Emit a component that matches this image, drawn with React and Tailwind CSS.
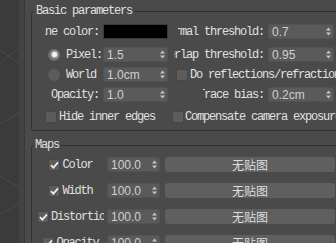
import React from "react";

const mono = "font-['Liberation_Mono',monospace] text-[12px] tracking-[-1.2px] text-[#e0e0e0] whitespace-nowrap";

function Arrows() {
  return (
    <svg width="5" height="9" viewBox="0 0 5 9" className="shrink-0">
      <path d="M0 3.5L2.5 0.5L5 3.5Z M0 5.5L5 5.5L2.5 8.5Z" fill="#c4c4c4" />
    </svg>
  );
}

function Spinner({ value, w }) {
  return (
    <div className={`flex items-center h-[15px] shrink-0 ${w} bg-[#5a5a5a] border border-[#525252] rounded-[2px] pl-[3px] pr-[2px]`}>
      <span className="flex-1 font-['Liberation_Sans',sans-serif] text-[12px] leading-none text-[#d0d0d0] whitespace-nowrap">{value}</span>
      <Arrows />
    </div>
  );
}

function Check({ checked }) {
  return (
    <div className="w-[12px] h-[12px] shrink-0 bg-[#5c5c5c] border border-[#464646] flex items-center justify-center">
      {checked && (
        <svg width="9" height="8" viewBox="0 0 9 8">
          <path d="M1 4.2L3.4 6.6L8 1.4" fill="none" stroke="#ececec" strokeWidth="1.8" />
        </svg>
      )}
    </div>
  );
}

function Radio({ on }) {
  return (
    <div className={`ml-[3px] w-[12px] h-[12px] shrink-0 rounded-full flex items-center justify-center ${on ? "bg-[#6c6c6c]" : "bg-[#5c5c5c]"}`}>
      {on && <div className="w-[5px] h-[5px] rounded-full bg-[#f4f4f4] shadow-[0_0_2px_1px_#c8c8c8]" />}
    </div>
  );
}

function RightLabel({ text, cls }) {
  return (
    <div className={`flex justify-end overflow-hidden shrink-0 ${cls}`}>
      <span className={`${mono} shrink-0`}>{text}</span>
    </div>
  );
}

function MapRow({ label, top, start }) {
  return (
    <div className={`flex items-center h-[15px] pl-[5px] ${top}`}>
      <div className={`w-[67px] flex items-center overflow-hidden shrink-0 ${start ? "justify-start" : "justify-center"}`}>
        <Check checked />
        <span className={`${mono} ml-[2px] shrink-0`}>{label}</span>
      </div>
      <div className="ml-[3px]">
        <Spinner value="100.0" w="w-[53px]" />
      </div>
      <div className="ml-[5px] w-[170px] h-[15px] shrink-0 bg-[#5f5f5f] rounded-[3px] flex items-center justify-center font-['Noto_Sans_CJK_SC',sans-serif] text-[12px] leading-none text-[#dedede]">
        无贴图
      </div>
    </div>
  );
}

export default function App() {
  return (
    <div className="w-[336px] h-[243px] overflow-hidden flex bg-[#4a4a4a]">
      <div className="w-[19px] h-full shrink-0 bg-[#3b3b3b]">
        <svg width="19" height="243" viewBox="0 0 19 243">
          <g stroke="#4a4a4a" strokeWidth="1" fill="none">
            <path d="M0 50L19 63" />
            <path d="M0 64L19 47" />
            <path d="M0 124L19 113" />
            <path d="M0 176L19 187" />
            <path d="M0 214L19 204" />
          </g>
        </svg>
      </div>
      <div className="w-[5px] h-full shrink-0 bg-[#434343]" />
      <div className="w-px h-full shrink-0 bg-[#383838]" />
      <div className="flex-1 overflow-hidden">
        <div className="w-[330px] pl-[6px] pt-[4px]">
          <fieldset className="border border-[#323232] rounded-[3px] pb-[6px]">
            <legend className={`${mono} ml-[2px] px-[2px] leading-[14px]`}>Basic parameters</legend>

            <div className="flex items-center h-[15px] mt-[6px] pl-[13px]">
              <div className="w-[54px] flex justify-end overflow-hidden shrink-0">
                <span className={`${mono} shrink-0`}>Line color:</span>
              </div>
              <div className="ml-[4px] w-[65px] h-[15px] shrink-0 bg-black border border-[#3a3a3a]" />
              <RightLabel text="Normal threshold:" cls="ml-[10px] w-[86px]" />
              <div className="ml-[4px]"><Spinner value="0.7" w="w-[66px]" /></div>
            </div>

            <div className="flex items-center h-[15px] mt-[8px] pl-[13px]">
              <div className="w-[54px] flex items-center shrink-0">
                <Radio on />
                <span className={`${mono} ml-[6px]`}>Pixel:</span>
              </div>
              <div className="ml-[4px]"><Spinner value="1.5" w="w-[65px]" /></div>
              <RightLabel text="Overlap threshold:" cls="ml-[6px] w-[90px]" />
              <div className="ml-[4px]"><Spinner value="0.95" w="w-[66px]" /></div>
            </div>

            <div className="flex items-center h-[15px] mt-[5px] pl-[13px]">
              <div className="w-[54px] flex items-center shrink-0">
                <Radio />
                <span className={`${mono} ml-[6px]`}>World</span>
              </div>
              <div className="ml-[4px]"><Spinner value="1.0cm" w="w-[65px]" /></div>
              <div className="ml-[8px] flex items-center">
                <Check />
                <span className={`${mono} ml-[2px]`}>Do reflections/refractions</span>
              </div>
            </div>

            <div className="flex items-center h-[15px] mt-[5px] pl-[13px]">
              <div className="w-[54px] flex justify-end overflow-hidden shrink-0">
                <span className={`${mono} shrink-0`}>Opacity:</span>
              </div>
              <div className="ml-[4px]"><Spinner value="1.0" w="w-[65px]" /></div>
              <RightLabel text="Trace bias:" cls="ml-[35px] w-[61px]" />
              <div className="ml-[4px]"><Spinner value="0.2cm" w="w-[66px]" /></div>
            </div>

            <div className="flex items-center h-[15px] mt-[7px] pl-[13px]">
              <div className="w-[127px] flex items-center shrink-0">
                <Check />
                <span className={`${mono} ml-[2px]`}>Hide inner edges</span>
              </div>
              <Check />
              <span className={`${mono} ml-[1px]`}>Compensate camera exposure</span>
            </div>
          </fieldset>

          <fieldset className="mt-[7px] border border-[#323232] rounded-[3px] pb-[6px]">
            <legend className={`${mono} ml-[2px] px-[1px] leading-[14px]`}>Maps</legend>
            <MapRow label="Color" top="mt-[5px]" />
            <MapRow label="Width" top="mt-[11px]" />
            <MapRow label="Distortion" top="mt-[11px]" start />
            <MapRow label="Opacity" top="mt-[11px]" />
          </fieldset>
        </div>
      </div>
    </div>
  );
}
